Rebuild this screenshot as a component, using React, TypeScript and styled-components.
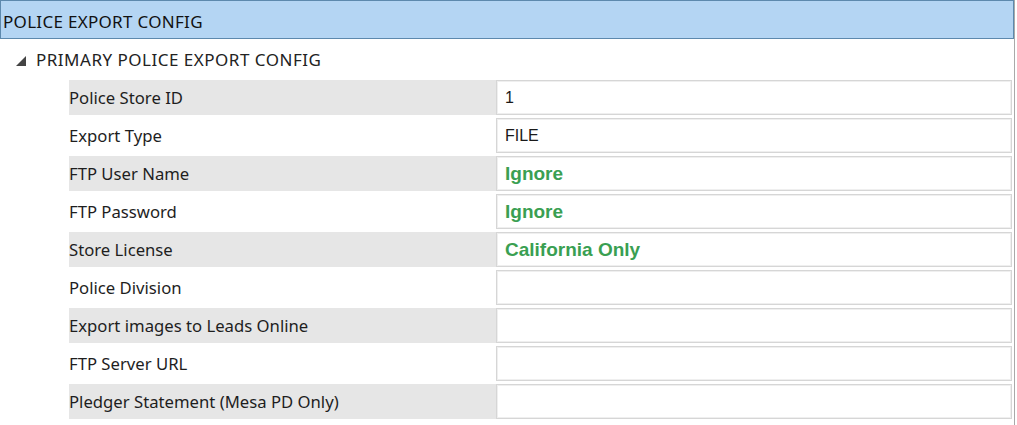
import React from 'react'
import styled, { createGlobalStyle } from 'styled-components'

type Field = { label: string; value?: string; flagged?: boolean }

const fields: Array<Field> = [
  { label: 'Police Store ID', value: '1' },
  { label: 'Export Type', value: 'FILE' },
  { label: 'FTP User Name', value: 'Ignore', flagged: true },
  { label: 'FTP Password', value: 'Ignore', flagged: true },
  { label: 'Store License', value: 'California Only', flagged: true },
  { label: 'Police Division' },
  { label: 'Export images to Leads Online' },
  { label: 'FTP Server URL' },
  { label: 'Pledger Statement (Mesa PD Only)' },
]

const Global = createGlobalStyle`
  body {
    margin: 0;
    background: #ffffff;
    font-family: 'Noto Sans', 'Open Sans', sans-serif;
  }
`

export default function App() {
  return (
    <>
      <Global />
      <S.Page>
        <S.Header>POLICE EXPORT CONFIG</S.Header>

        <S.Group>
          <S.Toggle />
          PRIMARY POLICE EXPORT CONFIG
        </S.Group>

        <S.Grid>
          {fields.map((f, i) => (
            <S.Row key={f.label} shaded={i % 2 === 0}>
              <S.Label>{f.label}</S.Label>
              <S.Value flagged={f.flagged}>{f.value}</S.Value>
            </S.Row>
          ))}
        </S.Grid>
      </S.Page>
    </>
  )
}

const S = {
  Page: styled.div`
    width: 1015px;
    height: 425px;
    border-right: 1px solid #a9a9a9;
    overflow: hidden;
    box-sizing: border-box;
  `,

  Header: styled.div`
    width: 1014px;
    height: 39px;
    box-sizing: border-box;
    border: 1px solid #5d89ad;
    background-color: #b4d5f3;
    color: #111;
    font-size: 17px;
    line-height: 37px;
    padding: 2px 0 0 2px;
    letter-spacing: 0.3px;
  `,

  Group: styled.div`
    display: flex;
    align-items: center;
    height: 41px;
    padding-left: 16px;
    font-size: 17px;
    color: #222;
    letter-spacing: 0.5px;
  `,

  Toggle: styled.span`
    width: 0;
    height: 0;
    margin: 2px 10px 0 0;
    border-left: 10px solid transparent;
    border-bottom: 10px solid #444;
  `,

  Grid: styled.div`
    display: flex;
    flex-direction: column;
    gap: 3px;
    padding-left: 69px;
    width: 943px;
  `,

  Row: styled.div<{ shaded?: boolean }>`
    display: grid;
    grid-template-columns: 427px 516px;
    height: 35px;
    background: ${({ shaded }) => shaded ? 'linear-gradient(to right, #e6e6e6 427px, transparent 427px)' : 'transparent'};
  `,

  Label: styled.div`
    display: flex;
    align-items: center;
    font-size: 16.7px;
    color: #1e1e1e;
  `,

  Value: styled.div<{ flagged?: boolean }>`
    display: flex;
    align-items: center;
    box-sizing: border-box;
    height: 35px;
    padding-left: 8px;
    border: 1px solid #d6d6d6;
    box-shadow: inset 0 0 0 1px #efefef;
    background: #fff;
    font-family: 'Liberation Sans', Arial, sans-serif;
    font-size: ${({ flagged }) => flagged ? '19px' : '16px'};
    font-weight: ${({ flagged }) => flagged ? 700 : 400};
    color: ${({ flagged }) => flagged ? '#3a9f52' : '#1a1a1a'};
  `,
}
